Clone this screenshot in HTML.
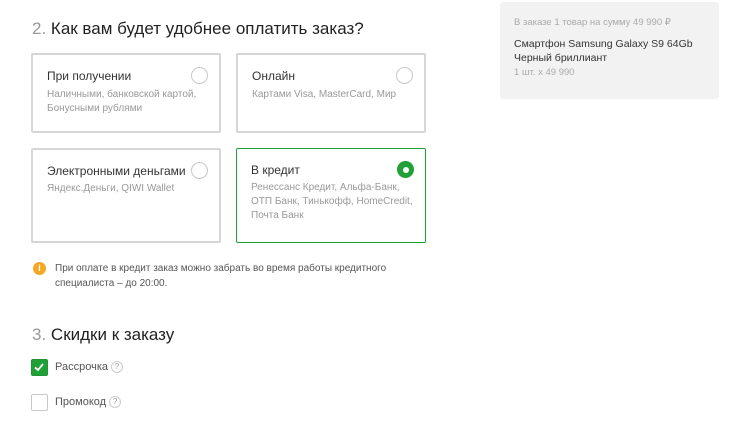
<!DOCTYPE html>
<html><head><meta charset="utf-8"><style>
*{margin:0;padding:0;box-sizing:border-box}
body{width:750px;height:429px;background:#fff;font-family:"Liberation Sans",sans-serif;position:relative;overflow:hidden;color:#333}
.a{position:absolute;white-space:nowrap}
h2{position:absolute;font-weight:normal;font-size:17px;color:#222}
h2 span{color:#999}
.card{position:absolute;width:190px;border:2px solid #d6d6d6;border-radius:2px}
.card.on{border:1.5px solid #21a038}
.card .t{position:absolute;left:14px;top:14px;font-size:12px;color:#333}
.card .s{position:absolute;left:14px;top:33px;font-size:10px;line-height:14px;color:#999}
.r{position:absolute;right:11px;top:12px;width:17px;height:17px;border-radius:50%;border:1.5px solid #c8c8c8}
.r.on{border:none;background:#21a038}
.r.on:after{content:"";position:absolute;left:5.5px;top:5.5px;width:6px;height:6px;border-radius:50%;background:#fff}
.cb{position:absolute;left:31px;width:17px;height:17px;border:1.5px solid #c8c8c8;border-radius:2px}
.q{display:inline-block;width:12px;height:12px;border:1px solid #ccc;border-radius:50%;font-size:8px;line-height:10px;text-align:center;color:#999;vertical-align:1px;margin-left:3px}
</style></head><body>
<h2 style="left:32px;top:19px"><span>2.</span> Как вам будет удобнее оплатить заказ?</h2>
<div class="card" style="left:31px;top:53px;height:80px"><div class="t">При получении</div><div class="s">Наличными, банковской картой,<br>Бонусными рублями</div><div class="r"></div></div>
<div class="card" style="left:236px;top:53px;height:80px"><div class="t">Онлайн</div><div class="s">Картами Visa, MasterCard, Мир</div><div class="r"></div></div>
<div class="card" style="left:31px;top:148px;height:95px"><div class="t">Электронными деньгами</div><div class="s" style="top:32px">Яндекс.Деньги, QIWI Wallet</div><div class="r"></div></div>
<div class="card on" style="left:236px;top:148px;height:95px"><div class="t">В кредит</div><div class="s" style="top:32px">Ренессанс Кредит, Альфа-Банк,<br>ОТП Банк, Тинькофф, HomeCredit,<br>Почта Банк</div><div class="r on"></div></div>
<div class="a" style="left:33px;top:262px;width:13px;height:13px;border-radius:50%;background:#f5a623;color:#fff;font-size:9px;font-weight:bold;text-align:center;line-height:13px">i</div>
<div class="a" style="left:55px;top:261px;font-size:10px;line-height:15px;color:#555">При оплате в кредит заказ можно забрать во время работы кредитного<br>специалиста – до 20:00.</div>
<h2 style="left:32px;top:325px"><span>3.</span> Скидки к заказу</h2>
<div class="cb" style="top:359px;background:#21a038;border-color:#1e9433"><svg width="14" height="14" viewBox="0 0 14 14" style="position:absolute;left:0;top:0"><path d="M3 7.5l3 2.5 5-6" fill="none" stroke="#fff" stroke-width="1.8"/></svg></div>
<div class="a" style="left:55px;top:361px;font-size:11px;color:#555">Рассрочка<span class="q">?</span></div>
<div class="cb" style="top:394px"></div>
<div class="a" style="left:55px;top:396px;font-size:11px;color:#555">Промокод<span class="q">?</span></div>
<div class="a" style="left:500px;top:2px;width:219px;height:97px;background:#f2f2f2;border-radius:3px"></div>
<div class="a" style="left:514px;top:17px;font-size:9.5px;color:#aaa">В заказе 1 товар на сумму 49 990 ₽</div>
<div class="a" style="left:514px;top:38px;font-size:10.5px;color:#333">Смартфон Samsung Galaxy S9 64Gb</div>
<div class="a" style="left:514px;top:52px;font-size:10.5px;color:#333">Черный бриллиант</div>
<div class="a" style="left:514px;top:67px;font-size:9.5px;color:#aaa">1 шт. x 49 990</div>
</body></html>
